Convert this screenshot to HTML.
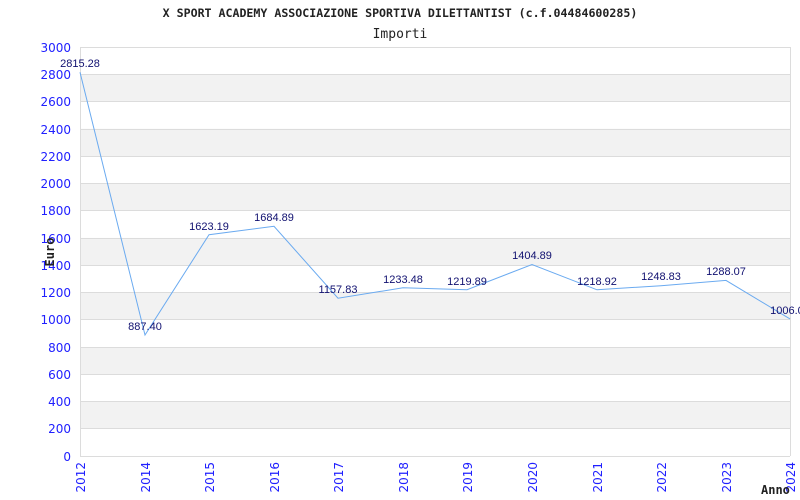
<!DOCTYPE html>
<html><head><style>body{margin:0;background:#fff}svg{display:block}</style></head><body>
<svg width="800" height="500" xmlns="http://www.w3.org/2000/svg">
<rect width="800" height="500" fill="#fff"/>
<g fill="#f2f2f2">
<rect x="80" y="401.5" width="710" height="27.3"/>
<rect x="80" y="347" width="710" height="27.3"/>
<rect x="80" y="292.4" width="710" height="27.3"/>
<rect x="80" y="237.9" width="710" height="27.3"/>
<rect x="80" y="183.3" width="710" height="27.3"/>
<rect x="80" y="128.8" width="710" height="27.3"/>
<rect x="80" y="74.2" width="710" height="27.3"/>
</g>
<g stroke="#dcdcdc" stroke-width="1">
<line x1="80" x2="790" y1="47.5" y2="47.5"/><line x1="80" x2="790" y1="74.5" y2="74.5"/><line x1="80" x2="790" y1="101.5" y2="101.5"/><line x1="80" x2="790" y1="129.5" y2="129.5"/><line x1="80" x2="790" y1="156.5" y2="156.5"/><line x1="80" x2="790" y1="183.5" y2="183.5"/><line x1="80" x2="790" y1="210.5" y2="210.5"/><line x1="80" x2="790" y1="238.5" y2="238.5"/><line x1="80" x2="790" y1="265.5" y2="265.5"/><line x1="80" x2="790" y1="292.5" y2="292.5"/><line x1="80" x2="790" y1="319.5" y2="319.5"/><line x1="80" x2="790" y1="347.5" y2="347.5"/><line x1="80" x2="790" y1="374.5" y2="374.5"/><line x1="80" x2="790" y1="401.5" y2="401.5"/><line x1="80" x2="790" y1="428.5" y2="428.5"/>
<line x1="80.5" x2="80.5" y1="47" y2="456"/><line x1="790.5" x2="790.5" y1="47" y2="456"/><line x1="80" x2="790" y1="456.5" y2="456.5"/>
</g>
<polyline fill="none" stroke="#6aaaf0" stroke-width="1" points="80,72.2 145,335 209,234.7 274,226.3 338,298.2 403,287.8 467,289.7 532,264.5 597,289.8 661,285.7 726,280.4 790,318.9"/>
<g font-family="DejaVu Sans, sans-serif" font-size="12" fill="#2020ff" text-anchor="end">
<text x="71" y="52">3000</text><text x="71" y="79">2800</text><text x="71" y="106">2600</text><text x="71" y="134">2400</text><text x="71" y="161">2200</text><text x="71" y="188">2000</text><text x="71" y="215">1800</text><text x="71" y="243">1600</text><text x="71" y="270">1400</text><text x="71" y="297">1200</text><text x="71" y="324">1000</text><text x="71" y="352">800</text><text x="71" y="379">600</text><text x="71" y="406">400</text><text x="71" y="433">200</text><text x="71" y="461">0</text>
</g>
<g font-family="DejaVu Sans, sans-serif" font-size="12" fill="#2020ff" text-anchor="end">
<text transform="translate(85,462) rotate(-90)">2012</text>
<text transform="translate(150,462) rotate(-90)">2014</text>
<text transform="translate(214,462) rotate(-90)">2015</text>
<text transform="translate(279,462) rotate(-90)">2016</text>
<text transform="translate(343,462) rotate(-90)">2017</text>
<text transform="translate(408,462) rotate(-90)">2018</text>
<text transform="translate(472,462) rotate(-90)">2019</text>
<text transform="translate(537,462) rotate(-90)">2020</text>
<text transform="translate(602,462) rotate(-90)">2021</text>
<text transform="translate(666,462) rotate(-90)">2022</text>
<text transform="translate(731,462) rotate(-90)">2023</text>
<text transform="translate(795,462) rotate(-90)">2024</text>
</g>
<g font-family="Liberation Sans, sans-serif" font-size="11" fill="#101070" text-anchor="middle">
<text x="80" y="67">2815.28</text><text x="145" y="330">887.40</text><text x="209" y="230">1623.19</text><text x="274" y="221">1684.89</text><text x="338" y="293">1157.83</text><text x="403" y="283">1233.48</text><text x="467" y="285">1219.89</text><text x="532" y="259">1404.89</text><text x="597" y="285">1218.92</text><text x="661" y="280">1248.83</text><text x="726" y="275">1288.07</text><text x="790" y="314">1006.00</text>
</g>
<g font-family="DejaVu Sans Mono, Liberation Mono, monospace" fill="#222">
<text x="400" y="17" font-size="11.6" font-weight="bold" text-anchor="middle">X SPORT ACADEMY ASSOCIAZIONE SPORTIVA DILETTANTIST (c.f.04484600285)</text>
<text x="400" y="38" font-size="13" text-anchor="middle">Importi</text>
<text transform="translate(54,252) rotate(-90)" font-size="12" font-weight="bold" text-anchor="middle">Euro</text>
<text x="761" y="494" font-size="12" font-weight="bold">Anno</text>
</g>
</svg>
</body></html>
